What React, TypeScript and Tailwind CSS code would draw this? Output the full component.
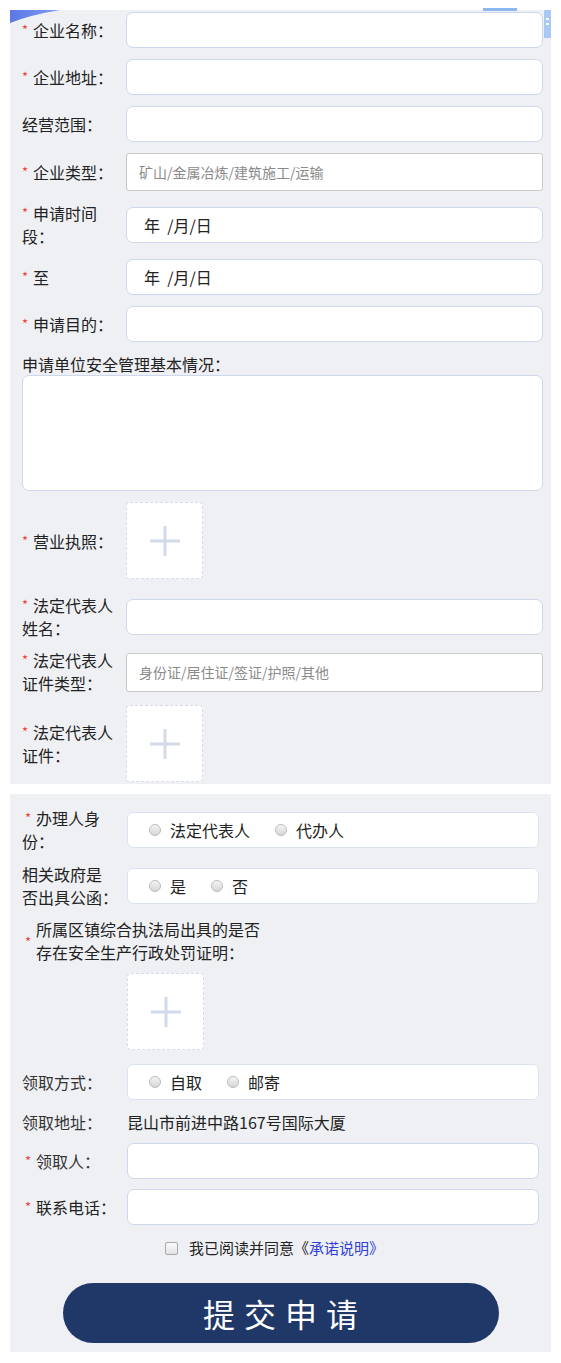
import type { ReactNode } from "react";

const FONT = { fontFamily: '"Noto Sans CJK SC", "Noto Sans", sans-serif' };

// Red required marker
function Star({ className = "" }: { className?: string }) {
  return (
    <span className={`inline-block w-[11px] text-[13px] leading-none text-[#f0423c] align-[2px] ${className}`}>*</span>
  );
}

function TextBox({ children, gray = false, h = "h-[36px]" }: { children?: ReactNode; gray?: boolean; h?: string }) {
  return (
    <div
      className={`flex-1 ${h} bg-white flex items-center ${
        gray ? "border border-[#c9c9c9] rounded-[3px]" : "border border-[#cdd7ee] rounded-[7px]"
      }`}
    >
      {children}
    </div>
  );
}

function Upload() {
  return (
    <div className="w-[77px] h-[77px] bg-white border border-dashed border-[#d3dbec] rounded-[4px] flex items-center justify-center">
      <svg width="32" height="32" viewBox="0 0 32 32">
        <rect x="14.5" y="1" width="3" height="30" fill="#d2daea" />
        <rect x="1" y="14.5" width="30" height="3" fill="#d2daea" />
      </svg>
    </div>
  );
}

function Radio({ label }: { label: string }) {
  return (
    <div className="flex items-center">
      <span className="w-[12px] h-[12px] rounded-full border border-[#bcbcbc] bg-gradient-to-b from-[#f4f4f4] to-[#d6d6d6]" />
      <span className="ml-[9px] text-[16px] text-[#222]">{label}</span>
    </div>
  );
}

function RadioBox({ options }: { options: string[] }) {
  return (
    <div className="flex-1 h-[36px] bg-white border border-[#dbe3f3] rounded-[6px] flex items-center pl-[21px] gap-[25px]">
      {options.map((o) => (
        <Radio key={o} label={o} />
      ))}
    </div>
  );
}

export default function App() {
  return (
    <div className="relative min-h-screen bg-white px-[10px] pt-[10px] pb-[10px] text-[16px] text-[#222]" style={FONT}>
      {/* banner peeking out over the form's top edge */}
      <svg className="absolute left-0 top-0 z-10 pointer-events-none" width="561" height="40" viewBox="0 0 561 40">
        <defs>
          <linearGradient id="bl" x1="0" x2="1" y1="0" y2="0">
            <stop offset="0" stopColor="#5b78e4" />
            <stop offset="1" stopColor="#7b9cf0" />
          </linearGradient>
        </defs>
        <path d="M10 10 L60 10 Q30 15 10 23 Z" fill="url(#bl)" />
        <rect x="483" y="8" width="34" height="3" fill="#8db8f2" />
        <rect x="544" y="10" width="7" height="28" fill="#a8c8f5" />
        <rect x="546" y="18" width="3" height="2" fill="#ffffff" />
        <rect x="546" y="23" width="3" height="2" fill="#ffffff" />
      </svg>

      {/* Enterprise info */}
      <section className="bg-[#eff0f4] pl-[12px] pr-[8px] pt-[2px] pb-[2px]">
        <div className="flex items-center mb-[11px]">
          <div className="w-[104px] shrink-0"><Star />企业名称：</div>
          <TextBox />
        </div>
        <div className="flex items-center mb-[11px]">
          <div className="w-[104px] shrink-0"><Star />企业地址：</div>
          <TextBox />
        </div>
        <div className="flex items-center mb-[11px]">
          <div className="w-[104px] shrink-0">经营范围：</div>
          <TextBox />
        </div>
        <div className="flex items-center mb-[11px]">
          <div className="w-[104px] shrink-0"><Star />企业类型：</div>
          <TextBox gray h="h-[38px]">
            <span className="pl-[12px] text-[14px] text-[#8a8a8a]">矿山/金属冶炼/建筑施工/运输</span>
          </TextBox>
        </div>
        <div className="flex items-center mb-[11px]">
          <div className="w-[104px] shrink-0 leading-[23px]"><Star />申请时间<br />段：</div>
          <TextBox>
            <span className="pl-[17px]">年&nbsp;&nbsp;/月/日</span>
          </TextBox>
        </div>
        <div className="flex items-center mb-[11px]">
          <div className="w-[104px] shrink-0"><Star />至</div>
          <TextBox>
            <span className="pl-[17px]">年&nbsp;&nbsp;/月/日</span>
          </TextBox>
        </div>
        <div className="flex items-center mb-[11px]">
          <div className="w-[104px] shrink-0"><Star />申请目的：</div>
          <TextBox />
        </div>

        <div className="leading-[22px]">申请单位安全管理基本情况：</div>
        <div className="h-[116px] bg-white border border-[#cdd7ee] rounded-[7px] mb-[11px]" />

        <div className="flex items-center mb-[15px]">
          <div className="w-[104px] shrink-0"><Star />营业执照：</div>
          <Upload />
        </div>

        <div className="flex items-center mb-[9px]">
          <div className="w-[104px] shrink-0 leading-[23px]"><Star />法定代表人<br />姓名：</div>
          <TextBox />
        </div>
        <div className="flex items-center mb-[10px]">
          <div className="w-[104px] shrink-0 leading-[23px]"><Star />法定代表人<br />证件类型：</div>
          <TextBox gray h="h-[39px]">
            <span className="pl-[12px] text-[14px] text-[#8a8a8a]">身份证/居住证/签证/护照/其他</span>
          </TextBox>
        </div>
        <div className="flex items-center">
          <div className="w-[104px] shrink-0 leading-[23px]"><Star />法定代表人<br />证件：</div>
          <Upload />
        </div>
      </section>

      {/* Applicant info */}
      <section className="bg-[#eff0f4] mt-[10px] pl-[12px] pr-[12px] pt-[13px] pb-[9px]">
        <div className="flex items-center mb-[10px]">
          <div className="w-[105px] shrink-0 leading-[23px]"><Star className="ml-[3px]" />办理人身<br />份：</div>
          <RadioBox options={["法定代表人", "代办人"]} />
        </div>
        <div className="flex items-center mb-[9px]">
          <div className="w-[105px] shrink-0 leading-[23px]">相关政府是<br />否出具公函：</div>
          <RadioBox options={["是", "否"]} />
        </div>
        <div className="flex items-center mb-[9px]">
          <Star className="ml-[3px] w-[10px]" />
          <div className="leading-[23px]">所属区镇综合执法局出具的是否<br />存在安全生产行政处罚证明：</div>
        </div>
        <div className="pl-[105px] mb-[14px]">
          <Upload />
        </div>
        <div className="flex items-center mb-[11px]">
          <div className="w-[105px] shrink-0 text-[#333]">领取方式：</div>
          <RadioBox options={["自取", "邮寄"]} />
        </div>
        <div className="flex items-center leading-[23px] mb-[9px]">
          <div className="w-[105px] shrink-0 text-[#333]">领取地址：</div>
          <div>昆山市前进中路167号国际大厦</div>
        </div>
        <div className="flex items-center mb-[10px]">
          <div className="w-[105px] shrink-0 text-[#333]"><Star className="ml-[3px]" />领取人：</div>
          <TextBox />
        </div>
        <div className="flex items-center mb-[12px]">
          <div className="w-[105px] shrink-0"><Star className="ml-[3px]" />联系电话：</div>
          <TextBox />
        </div>

        <div className="flex items-center h-[22px] mb-[24px] pl-[143px]">
          <span className="w-[13px] h-[13px] rounded-[2px] border border-[#a9a9a9] bg-gradient-to-b from-[#fafafa] to-[#e2e2e2]" />
          <span className="ml-[11px] text-[15px] text-[#222]">
            我已阅读并同意《<span className="text-[#2f3fd8]">承诺说明》</span>
          </span>
        </div>

        <div className="flex justify-center">
          <button className="w-[436px] h-[60px] rounded-full bg-[#1f3868] text-white text-[32px] tracking-[9px] pl-[9px]">
            提交申请
          </button>
        </div>
      </section>
    </div>
  );
}
